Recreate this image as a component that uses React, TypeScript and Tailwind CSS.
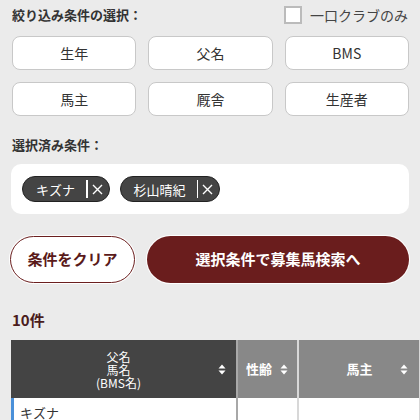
import React from "react";

const font = { fontFamily: '"Noto Sans CJK JP", "Noto Sans", sans-serif' };

function SortIcon() {
  return (
    <svg width="8" height="11" viewBox="0 0 8 11" className="shrink-0">
      <path d="M4 0.5 L7.5 4.5 L0.5 4.5 Z" fill="#fff" />
      <path d="M4 10.5 L7.5 6.5 L0.5 6.5 Z" fill="#fff" />
    </svg>
  );
}

function Chip({ label }: { label: string }) {
  return (
    <div className="flex items-center h-[26px] rounded-full bg-[#444] border border-[#222] pl-[13px] pr-[6px]">
      <span className="text-[13px] text-white leading-none">{label}</span>
      <span className="ml-[11px] w-[1.5px] h-[18px] bg-white" />
      <svg width="11" height="11" viewBox="0 0 11 11" className="ml-[4px]">
        <path d="M1 1 L10 10 M10 1 L1 10" stroke="#fff" strokeWidth="1.4" />
      </svg>
    </div>
  );
}

export default function App() {
  const filters = ["生年", "父名", "BMS", "馬主", "厩舎", "生産者"];
  return (
    <div className="w-[420px] h-[420px] overflow-hidden bg-[#ebebeb]" style={font}>
      <div className="flex items-center justify-between pl-[12px] pr-[12px] pt-[6px]">
        <div className="text-[13px] font-bold text-[#333] leading-[18px]">絞り込み条件の選択：</div>
        <div className="flex items-center gap-[8px]">
          <span className="w-[18px] h-[18px] bg-white border-2 border-[#bbb]" />
          <span className="text-[14px] text-[#444] leading-[18px]">一口クラブのみ</span>
        </div>
      </div>

      <div className="grid grid-cols-3 gap-[12px] pl-[12px] pr-[11px] mt-[12px]">
        {filters.map((f) => (
          <div
            key={f}
            className="h-[34px] flex items-center justify-center bg-white border border-[#c8c8c8] rounded-[8px] text-[14px] text-[#333]"
          >
            {f}
          </div>
        ))}
      </div>

      <div className="pl-[12px] mt-[20px] text-[13px] font-bold text-[#333] leading-[18px]">選択済み条件：</div>

      <div className="mt-[10px] ml-[11px] mr-[11px] h-[50px] bg-white rounded-[10px] flex items-center gap-[10px] pl-[11px]">
        <Chip label="キズナ" />
        <Chip label="杉山晴紀" />
      </div>

      <div className="mt-[22px] ml-[10px] mr-[11px] flex gap-[12px]">
        <div className="w-[125px] h-[47px] rounded-full bg-white border border-[#6b1f1f] ring-1 ring-white flex items-center justify-center text-[15px] font-bold text-[#5a1a1a]">
          条件をクリア
        </div>
        <div className="flex-1 h-[47px] rounded-full bg-[#6a1d1d] ring-1 ring-white flex items-center justify-center text-[15px] font-bold text-white">
          選択条件で募集馬検索へ
        </div>
      </div>

      <div className="pl-[12px] mt-[27px] text-[15px] font-bold text-[#4a1c1c] leading-[20px]">10件</div>

      <div className="mt-[10px] ml-[11px] flex w-[480px]">
        <div className="w-[225px] shrink-0 flex flex-col">
          <div className="h-[58px] bg-[#444] flex items-center pr-[10px]">
            <div className="flex-1 flex flex-col items-center text-[12px] text-white pl-[8px]">
              <span className="leading-[13px]">父名</span>
              <span className="leading-[13px]">馬名</span>
              <span className="leading-[13px]">(BMS名)</span>
            </div>
            <SortIcon />
          </div>
          <div className="h-[30px] bg-white border-l-[3px] border-[#4a90d9] pl-[6px] pt-[7px] text-[13px] text-[#333] leading-[16px]">
            キズナ
          </div>
        </div>
        <div className="w-[2px] shrink-0 bg-[#a8a8a8]" />
        <div className="w-[59px] shrink-0 flex flex-col">
          <div className="h-[58px] bg-[#888] flex items-center pl-[8px] pr-[9px] gap-[8px]">
            <span className="text-[13px] font-bold text-white">性齢</span>
            <SortIcon />
          </div>
          <div className="h-[30px] bg-white" />
        </div>
        <div className="w-[2px] shrink-0 bg-[#d8d8d8]" />
        <div className="w-[120px] shrink-0 flex flex-col">
          <div className="h-[58px] bg-[#888] flex items-center pr-[11px]">
            <span className="flex-1 text-center text-[13px] font-bold text-white pl-[20px]">馬主</span>
            <SortIcon />
          </div>
          <div className="h-[30px] bg-white" />
        </div>
        <div className="w-[2px] shrink-0 bg-[#d8d8d8]" />
        <div className="flex-1 flex flex-col">
          <div className="h-[58px] bg-[#888]" />
          <div className="h-[30px] bg-white" />
        </div>
      </div>
    </div>
  );
}
